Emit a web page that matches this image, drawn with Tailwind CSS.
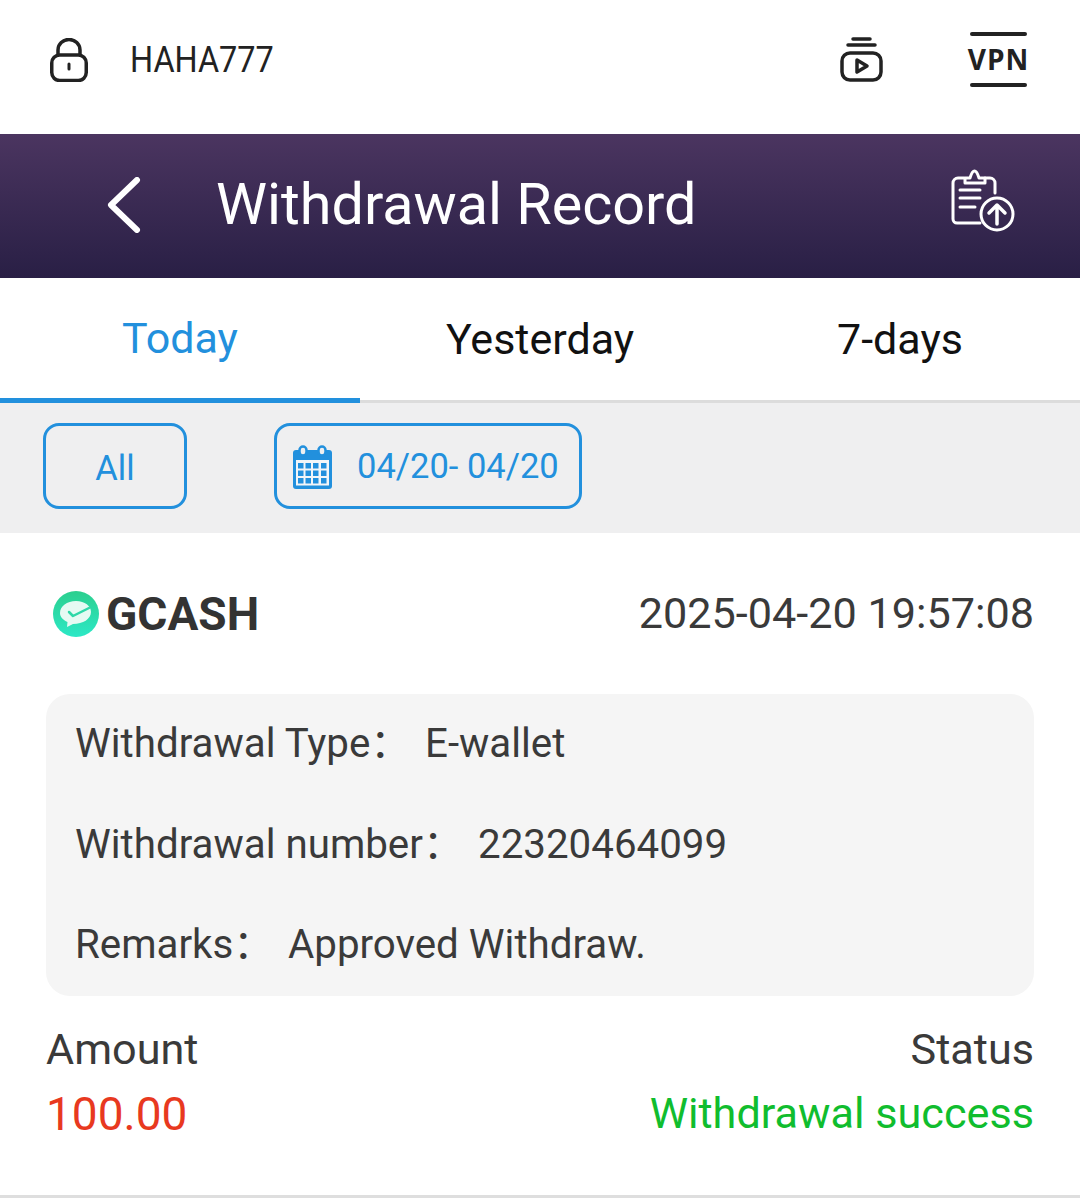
<!DOCTYPE html>
<html lang="en">
<head>
    <meta charset="UTF-8">
    <meta name="viewport" content="width=device-width, initial-scale=1.0">
    <title>Withdrawal Record</title>
    <script src="https://cdn.jsdelivr.net/npm/@tailwindcss/browser@4"></script>
</head>
<body class="bg-white font-['Roboto','Noto_Sans_CJK_SC',sans-serif] h-[1198px] w-[1080px] overflow-hidden">
    <!-- Top bar -->
    <div class="h-[134px] flex items-center pl-[50px] pr-[53px] pb-[15px] text-[#222]">
        <svg class="w-[38px] h-[44px]" viewBox="0 0 38 44" fill="none" stroke="#222" stroke-width="3.5">
            <path d="M8 18V12a11 10.500 0 0 1 22 0v6"/>
            <rect x="1.750" y="17" width="34.500" height="25.500" rx="8"/>
            <path d="M19 26v5" stroke-linecap="round" stroke-width="3"/>
        </svg>
        <span class="ml-[42px] text-[36px] leading-none scale-x-[0.9] origin-left">HAHA777</span>
        <svg class="ml-auto w-[43px] h-[45px]" viewBox="0 0 43 45" fill="none" stroke="#222" stroke-width="3.5" stroke-linecap="round" stroke-linejoin="round">
            <path d="M13 2h17M8 8h27"/>
            <rect x="2" y="16" width="39" height="27" rx="8"/>
            <path d="M17 23l10 6-10 6z"/>
        </svg>
        <div class="ml-[87px] w-[57px] flex flex-col items-center">
            <div class="w-full h-[4px] rounded-full bg-[#222]"></div>
            <span class="text-[28px] leading-[46px] font-bold tracking-[1px] mb-[1px] font-['Open_Sans',sans-serif]">VPN</span>
            <div class="w-full h-[4px] rounded-full bg-[#222]"></div>
        </div>
    </div>

    <!-- Header -->
    <div class="h-[144px] flex items-center bg-gradient-to-b from-[#4b3560] to-[#291f45] text-white">
        <svg class="ml-[107px] mb-[2px] w-[34px] h-[56px]" viewBox="0 0 34 56" fill="none" stroke="#fff" stroke-width="6" stroke-linecap="round" stroke-linejoin="round">
            <path d="M30 3L4 28l26 25"/>
        </svg>
        <h1 class="ml-[75px] mb-[3px] text-[57.500px] leading-none">Withdrawal Record</h1>
        <svg class="ml-auto mr-[65px] mb-[11px] w-[65px] h-[63px]" viewBox="0 0 65 63" fill="none" stroke="#fff" stroke-width="3" stroke-linecap="round" stroke-linejoin="round">
            <path d="M14 9H8a5 5 0 0 0-5 5v36a4 4 0 0 0 4 4h23"/>
            <path d="M35 9h5a5 5 0 0 1 5 5v10"/>
            <path d="M15 14V9h5c1-3 2-7 4.500-7s3.500 4 4.500 7h6v5z"/>
            <path d="M10 21h20M10 29h20M10 38h15"/>
            <circle cx="47" cy="45" r="16"/>
            <path d="M47 55V36M39 44l8-8 8 8" stroke-width="3.500"/>
        </svg>
    </div>

    <!-- Tabs -->
    <div class="h-[125px] grid grid-cols-3 text-[43px] text-[#111] border-b-[3px] border-[#dcdcdc]">
        <div class="flex items-center justify-center text-[#2290dd] h-[125px] border-b-[5px] border-[#2290dd]">Today</div>
        <div class="flex items-center justify-center pb-[2px]">Yesterday</div>
        <div class="flex items-center justify-center pb-[2px]">7-days</div>
    </div>

    <!-- Filters -->
    <div class="h-[130px] bg-[#efeff0] flex items-center pl-[43px] pb-[4px] text-[#2290dd]">
        <div class="w-[144px] h-[86px] border-[3px] border-[#2290dd] rounded-[16px] flex items-center justify-center text-[34.500px] pt-[6px]">All</div>
        <div class="ml-[87px] w-[308px] h-[86px] border-[3px] border-[#2290dd] rounded-[16px] flex items-center pl-[16px] text-[34.500px]">
            <svg class="w-[40px] h-[44px] mt-[1px]" viewBox="0 0 40 44">
                <rect x="0" y="5" width="39" height="39" rx="3" fill="#2290dd"/>
                <rect x="3" y="15" width="33" height="25.500" fill="#f2f5f8"/>
                <rect x="6.500" y="1.500" width="7" height="9" rx="3.500" fill="#efeff0" stroke="#2290dd" stroke-width="2.500"/>
                <rect x="25.500" y="1.500" width="7" height="9" rx="3.500" fill="#efeff0" stroke="#2290dd" stroke-width="2.500"/>
                <g fill="#2290dd">
                    <rect x="5" y="18" width="5.500" height="5.500"/><rect x="12.500" y="18" width="5.500" height="5.500"/><rect x="20" y="18" width="5.500" height="5.500"/><rect x="28" y="18" width="5.500" height="5.500"/>
                    <rect x="5" y="25.500" width="5.500" height="5.500"/><rect x="12.500" y="25.500" width="5.500" height="5.500"/><rect x="20" y="25.500" width="5.500" height="5.500"/><rect x="28" y="25.500" width="5.500" height="5.500"/>
                    <rect x="5" y="33" width="5.500" height="5.500"/><rect x="12.500" y="33" width="5.500" height="5.500"/><rect x="20" y="33" width="5.500" height="5.500"/><rect x="28" y="33" width="5.500" height="5.500"/>
                </g>
            </svg>
            <span class="ml-[24px] leading-none">04/20- 04/20</span>
        </div>
    </div>

    <!-- Record -->
    <div class="h-[665px] border-b-[3px] border-[#dedede] px-[46px] flex flex-col text-[#3a3a3a]">
        <div class="h-[161px] flex items-center justify-between">
            <div class="flex items-center pl-[7px]">
                <svg class="w-[46px] h-[46px]" viewBox="0 0 46 46">
                    <defs>
                        <linearGradient id="gcash" x1="0" y1="0" x2="0" y2="1">
                            <stop offset="0" stop-color="#2bcf8e"/>
                            <stop offset="1" stop-color="#2ce8c6"/>
                        </linearGradient>
                    </defs>
                    <circle cx="23" cy="23" r="23" fill="url(#gcash)"/>
                    <path fill="#e6faf3" d="M23 10c9 0 15 5 15 11 0 7-8 12-18 12l-6 3 .5-5C10 29 7 26 7 22c0-7 7-12 16-12z"/>
                    <path fill="none" stroke="#2fd8a8" stroke-width="2.500" stroke-linecap="round" stroke-linejoin="round" d="M16 21l4 4 16-8"/>
                </svg>
                <span class="ml-[7px] text-[46px] font-bold leading-none text-[#333]">GCASH</span>
            </div>
            <span class="text-[43.200px] leading-none pt-[1px]">2025-04-20 19:57:08</span>
        </div>
        <div class="h-[302px] rounded-[24px] bg-[#f5f5f5] pl-[29px] pt-[25px] text-[40.300px] leading-[50px] flex flex-col gap-[50.500px] whitespace-nowrap">
            <div class="flex"><span class="w-[350px]">Withdrawal Type：</span><span>E-wallet</span></div>
            <div class="flex"><span class="w-[403px]">Withdrawal number：</span><span>22320464099</span></div>
            <div class="flex"><span class="w-[213px]">Remarks：</span><span>Approved Withdraw.</span></div>
        </div>
        <div class="mt-[29px] flex justify-between text-[43.200px] leading-[50px]">
            <span>Amount</span>
            <span>Status</span>
        </div>
        <div class="mt-[14px] flex justify-between items-center leading-[50px]">
            <span class="text-[46px] text-[#e8391f]">100.00</span>
            <span class="text-[43.200px] text-[#10bd2e]">Withdrawal success</span>
        </div>
    </div>
</body>
</html>
